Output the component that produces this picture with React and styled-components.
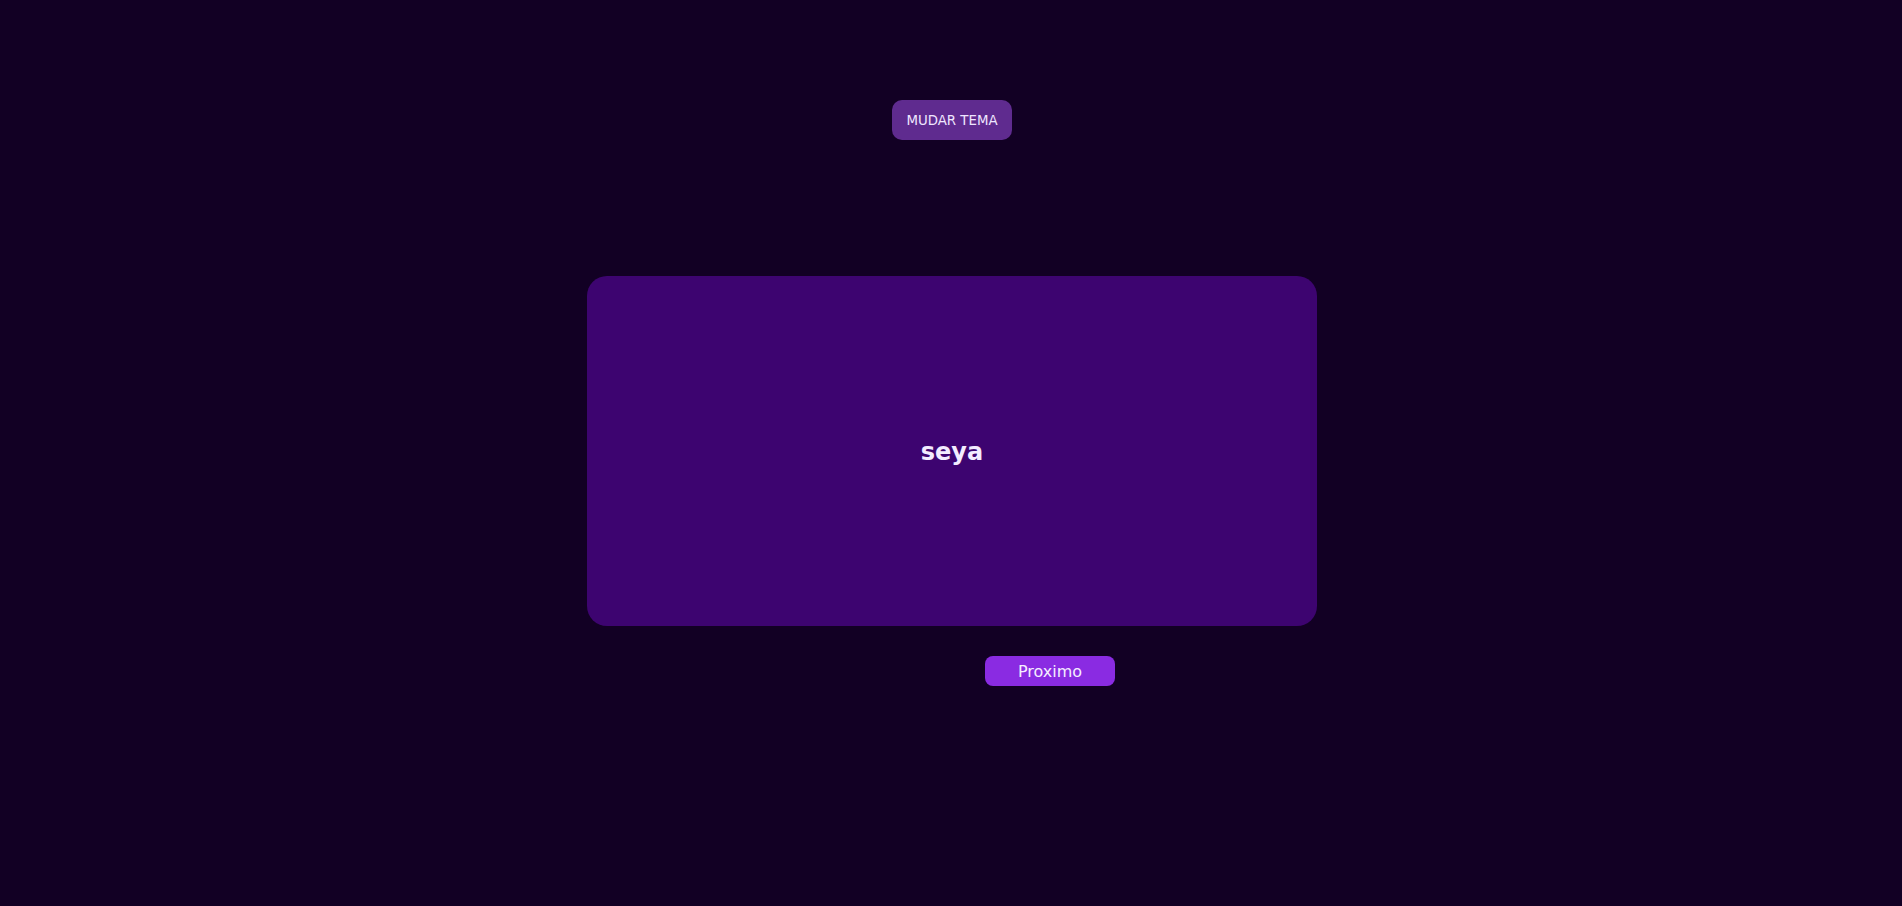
import React from "react";
import styled, { createGlobalStyle } from "styled-components";

const GlobalStyle = createGlobalStyle`
  html, body {
    margin: 0;
    padding: 0;
    background: #120024;
    font-family: "DejaVu Sans", Verdana, sans-serif;
  }
`;

const Page = styled.div`
  min-height: 906px;
  display: flex;
  flex-direction: column;
  align-items: center;
  padding: 100px 0 0 2px;
  box-sizing: border-box;
`;

const ThemeButton = styled.button`
  height: 40px;
  padding: 0 14px;
  border: none;
  border-radius: 10px;
  background: #5f2b8f;
  color: #efe6ff;
  font-family: "DejaVu Sans", Verdana, sans-serif;
  font-size: 13.333px;
  text-transform: uppercase;
  cursor: pointer;
`;

const Card = styled.div`
  margin-top: 136px;
  width: 730px;
  height: 350px;
  border-radius: 20px;
  background: #3d0470;
  display: flex;
  align-items: center;
  justify-content: center;
  color: #f3ebff;
  font-size: 24px;
  font-weight: bold;
  padding-top: 2px;
  box-sizing: border-box;
`;

const Controls = styled.div`
  margin-top: 30px;
  width: 730px;
  display: flex;
  justify-content: center;
  padding-left: 196px;
  box-sizing: border-box;
`;

const NextButton = styled.button`
  width: 130px;
  height: 30px;
  border: none;
  border-radius: 8px;
  background: #8a2be2;
  color: #f5eeff;
  font-family: "DejaVu Sans", Verdana, sans-serif;
  font-size: 16px;
  cursor: pointer;
`;

export default function App() {
  const words = ["seya"];
  const [index, setIndex] = React.useState(0);

  return (
    <>
      <GlobalStyle />
      <Page>
        <ThemeButton>Mudar tema</ThemeButton>
        <Card>{words[index]}</Card>
        <Controls>
          <NextButton onClick={() => setIndex((index + 1) % words.length)}>
            Proximo
          </NextButton>
        </Controls>
      </Page>
    </>
  );
}
